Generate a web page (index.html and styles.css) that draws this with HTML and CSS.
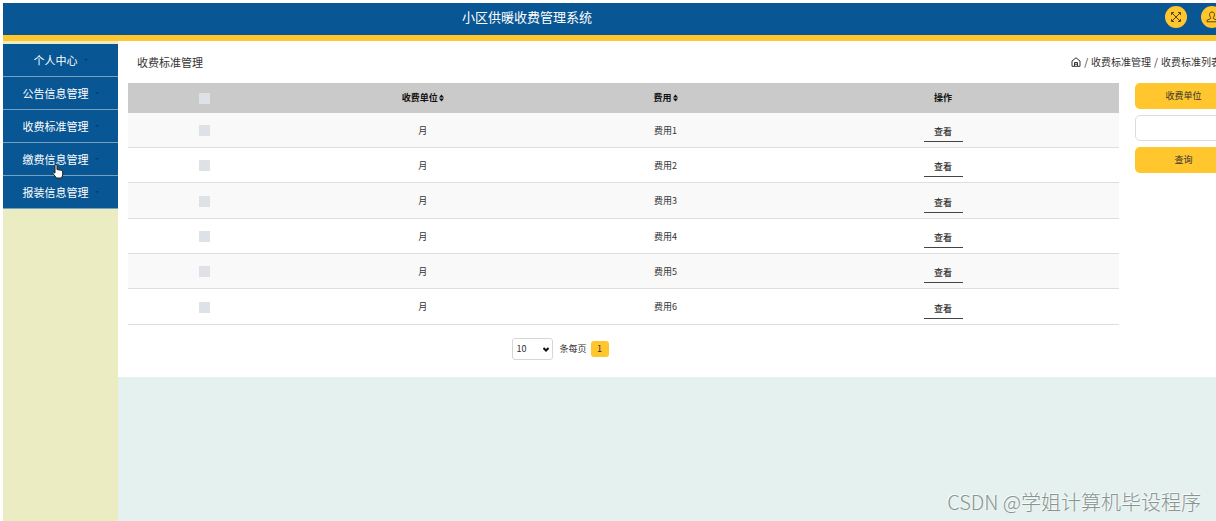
FILE: index.html
```html
<!DOCTYPE html>
<html lang="zh-CN">
<head>
<meta charset="utf-8">
<title>小区供暖收费管理系统</title>
<link rel="stylesheet" href="styles.css">
</head>
<body>
<div class="app">
  <header class="topbar">
    <h1 class="topbar-title">小区供暖收费管理系统</h1>
    <div class="topbar-actions">
      <button class="round" type="button" aria-label="全屏"><svg width="12" height="12" viewBox="0 0 12 12"><path d="M2 2l8 8M10 2l-8 8M1.500 4V1.500H4M8 1.500h2.500V4M10.500 8v2.500H8M4 10.500H1.500V8"/></svg></button>
      <button class="round" type="button" aria-label="用户"><svg width="12" height="12" viewBox="0 0 12 12"><path d="M6 1C2.800 1 3.200 5 4.700 6.500V7.500L1 9.300V10.800H11V9.300L7.300 7.500V6.500C8.800 5 9.200 1 6 1Z"/></svg></button>
    </div>
  </header>
  <div class="layout">
    <nav class="sidebar">
      <a class="nav-item" href="#">个人中心<span class="caret"></span></a>
      <a class="nav-item" href="#">公告信息管理<span class="caret"></span></a>
      <a class="nav-item" href="#">收费标准管理<span class="caret"></span></a>
      <a class="nav-item" href="#">缴费信息管理<span class="caret"></span></a>
      <a class="nav-item" href="#">报装信息管理<span class="caret"></span></a>
    </nav>
    <main class="content">
      <div class="panel">
        <div class="panel-head">
          <h2 class="panel-title">收费标准管理</h2>
          <div class="crumbs">
            <a href="#" class="home" aria-label="首页"><svg width="10" height="10" viewBox="0 0 10 10"><path d="M1 4L5 .8 9 4V9.300H1ZM3.500 9V5.500H6.500V9M3.500 7.200H6.500"/></svg></a>
            <span>/</span><a href="#">收费标准管理</a><span>/</span><span>收费标准列表</span>
          </div>
        </div>
        <div class="panel-body">
          <div class="list">
            <table class="grid">
              <colgroup><col class="c-check"><col class="c-unit"><col class="c-fee"><col class="c-op"></colgroup>
              <thead><tr>
                <th><input class="tick" type="checkbox" aria-label="全选"></th>
                <th>收费单位<svg class="sort" width="5" height="8" viewBox="0 0 5 8"><path d="M0 3.500L2.500 .5 5 3.500ZM0 4.500L2.500 7.500 5 4.500Z"/></svg></th>
                <th>费用<svg class="sort" width="5" height="8" viewBox="0 0 5 8"><path d="M0 3.500L2.500 .5 5 3.500ZM0 4.500L2.500 7.500 5 4.500Z"/></svg></th>
                <th>操作</th>
              </tr></thead>
              <tbody>
                <tr><td><input class="tick" type="checkbox" aria-label="选择费用1"></td><td>月</td><td>费用1</td><td><button class="view" type="button">查看</button></td></tr>
                <tr><td><input class="tick" type="checkbox" aria-label="选择费用2"></td><td>月</td><td>费用2</td><td><button class="view" type="button">查看</button></td></tr>
                <tr><td><input class="tick" type="checkbox" aria-label="选择费用3"></td><td>月</td><td>费用3</td><td><button class="view" type="button">查看</button></td></tr>
                <tr><td><input class="tick" type="checkbox" aria-label="选择费用4"></td><td>月</td><td>费用4</td><td><button class="view" type="button">查看</button></td></tr>
                <tr><td><input class="tick" type="checkbox" aria-label="选择费用5"></td><td>月</td><td>费用5</td><td><button class="view" type="button">查看</button></td></tr>
                <tr><td><input class="tick" type="checkbox" aria-label="选择费用6"></td><td>月</td><td>费用6</td><td><button class="view" type="button">查看</button></td></tr>
              </tbody>
            </table>
            <div class="pager">
              <div class="size-box">
                <select class="size" id="size"><option>10</option><option>25</option><option>50</option></select>
                <svg class="chevron" width="6" height="5" viewBox="0 0 6 5"><path d="M.5 1L3 3.500 5.500 1"/></svg>
              </div>
              <label for="size">条每页</label>
              <button class="page" type="button">1</button>
            </div>
          </div>
          <form class="search">
            <label class="pill" for="unit">收费单位</label>
            <input class="field" id="unit" type="text">
            <button class="pill" type="button">查询</button>
          </form>
        </div>
      </div>
    </main>
  </div>
</div>
<svg class="cursor" width="12" height="17" viewBox="0 0 12 17"><path d="M3 10V2Q4 .5 5 2V6.500L9.500 7.300Q10.800 7.700 10.700 9V12L9.500 15H4.500L1 10.500Q1 9 3 10Z"/></svg>
<div class="watermark">CSDN @学姐计算机毕设程序</div>
</body>
</html>
```
FILE: styles.css
```css
* { box-sizing: border-box; }
html { height: 100%; overflow: hidden; }
body {
  margin: 0;
  height: 100%;
  padding: 3px 0 0 3px;
  overflow: hidden;
  background: #fff;
  color: #333;
  font: 9px/14px "Noto Sans CJK SC", "Noto Sans", sans-serif;
}
a { color: inherit; text-decoration: none; }
button, input, select { font: inherit; color: inherit; margin: 0; }
button { border: 0; padding: 0; cursor: pointer; }
svg { fill: none; stroke: currentColor; }

/* The application runs slightly wider than the window. */
.app { display: flex; flex-direction: column; height: 100%; margin-right: -23px; }

.topbar {
  display: flex;
  align-items: center;
  flex: none;
  height: 38px;
  background: #085694;
  border-bottom: 6px solid #ffc62e;
  padding: 0 16px 4px 0;
}
.topbar-title { flex: 1; margin: 0; color: #fff; font-size: 13px; line-height: 20px; font-weight: 400; text-align: center; }
.topbar-actions { display: flex; justify-content: flex-end; gap: 14px; flex: 0 0 172px; }
.round {
  display: grid;
  place-items: center;
  width: 22px;
  height: 22px;
  border-radius: 50%;
  background: #ffc62e;
  color: #54430f;
}

.layout { display: flex; flex: 1; min-height: 0; }
.sidebar { flex: none; width: 115px; padding-top: 3px; background: #ebecc2; }
.nav-item {
  display: flex;
  align-items: center;
  justify-content: center;
  gap: 6px;
  height: 33px;
  background: #085694;
  border-bottom: 1px solid #76a2c2;
  color: #fff;
  font-size: 11px;
  line-height: 16px;
}
.caret { border: 2px solid transparent; border-top-color: #083c66; border-bottom: 0; }

.content { flex: 1; min-width: 0; background: #e5f1ee; }
.panel { background: #fff; padding: 11px 7px 17px 10px; }
.panel-head { display: flex; justify-content: space-between; align-items: center; height: 20px; margin-bottom: 11px; padding: 0 9px; }
.panel-title { margin: 0; font-size: 11px; line-height: 16px; font-weight: 400; }
.crumbs { display: flex; align-items: center; gap: 3px; padding-right: 2px; font-size: 10px; white-space: nowrap; }
.home { display: flex; }
.panel-body { display: flex; align-items: flex-start; gap: 16px; }
.list { flex: 1; min-width: 0; }

.grid { width: 100%; border-collapse: separate; border-spacing: 0; table-layout: fixed; text-align: center; }
.c-check { width: 15.5%; }
.c-unit { width: 28.5%; }
.c-fee { width: 20.5%; }
.grid th { height: 30px; padding: 0; background: #cacaca; color: #111; font-weight: 700; }
.grid td { height: 35px; padding: 1px 0 0; border-bottom: 1px solid #dedede; }
.grid tr:nth-child(3n) td { height: 36px; }
.grid tbody tr:nth-child(odd) { background: #f9f9f9; }
.sort { margin-left: 1px; vertical-align: -1px; fill: #111; stroke: none; }
.tick { appearance: none; display: block; width: 11px; height: 11px; margin: 0 auto; background: #dee1e6; }
.view { width: 39px; height: 23px; padding-top: 3px; border-bottom: 1px solid #444; background: none; vertical-align: bottom; font-weight: 500; }
.grid td:last-child { vertical-align: bottom; padding-bottom: 5px; }

.pager { display: flex; align-items: center; justify-content: center; gap: 4px; margin-top: 13px; padding-right: 126px; }
.pager label { padding-left: 2px; }
.size-box { display: grid; align-items: center; }
.size { grid-area: 1 / 1; appearance: none; width: 41px; height: 22px; padding: 0 3px; border: 1px solid #d6d6d6; border-radius: 3px; background: #fff; }
.chevron { grid-area: 1 / 1; justify-self: end; margin-right: 4px; stroke: #111; stroke-width: 2; pointer-events: none; }
.page { width: 18px; height: 16px; border-radius: 3px; background: #ffc62e; }

.search { display: flex; flex-direction: column; flex: 0 0 97px; gap: 6px; }
.pill { display: grid; place-items: center; height: 26px; border-radius: 5px; background: #ffc62e; }
.field { width: 100%; height: 26px; border: 1px solid #dcdcdc; border-radius: 5px; background: #fff; padding: 0 6px; }

.cursor { position: absolute; left: 52px; top: 163px; fill: #fff; stroke: #222; }
.watermark {
  position: absolute;
  right: 15px;
  bottom: 5px;
  color: #8b9391;
  font-size: 20px;
  line-height: 28px;
  font-weight: 300;
  text-shadow: -1px -1px 0 #f7fcfa;
}
```
